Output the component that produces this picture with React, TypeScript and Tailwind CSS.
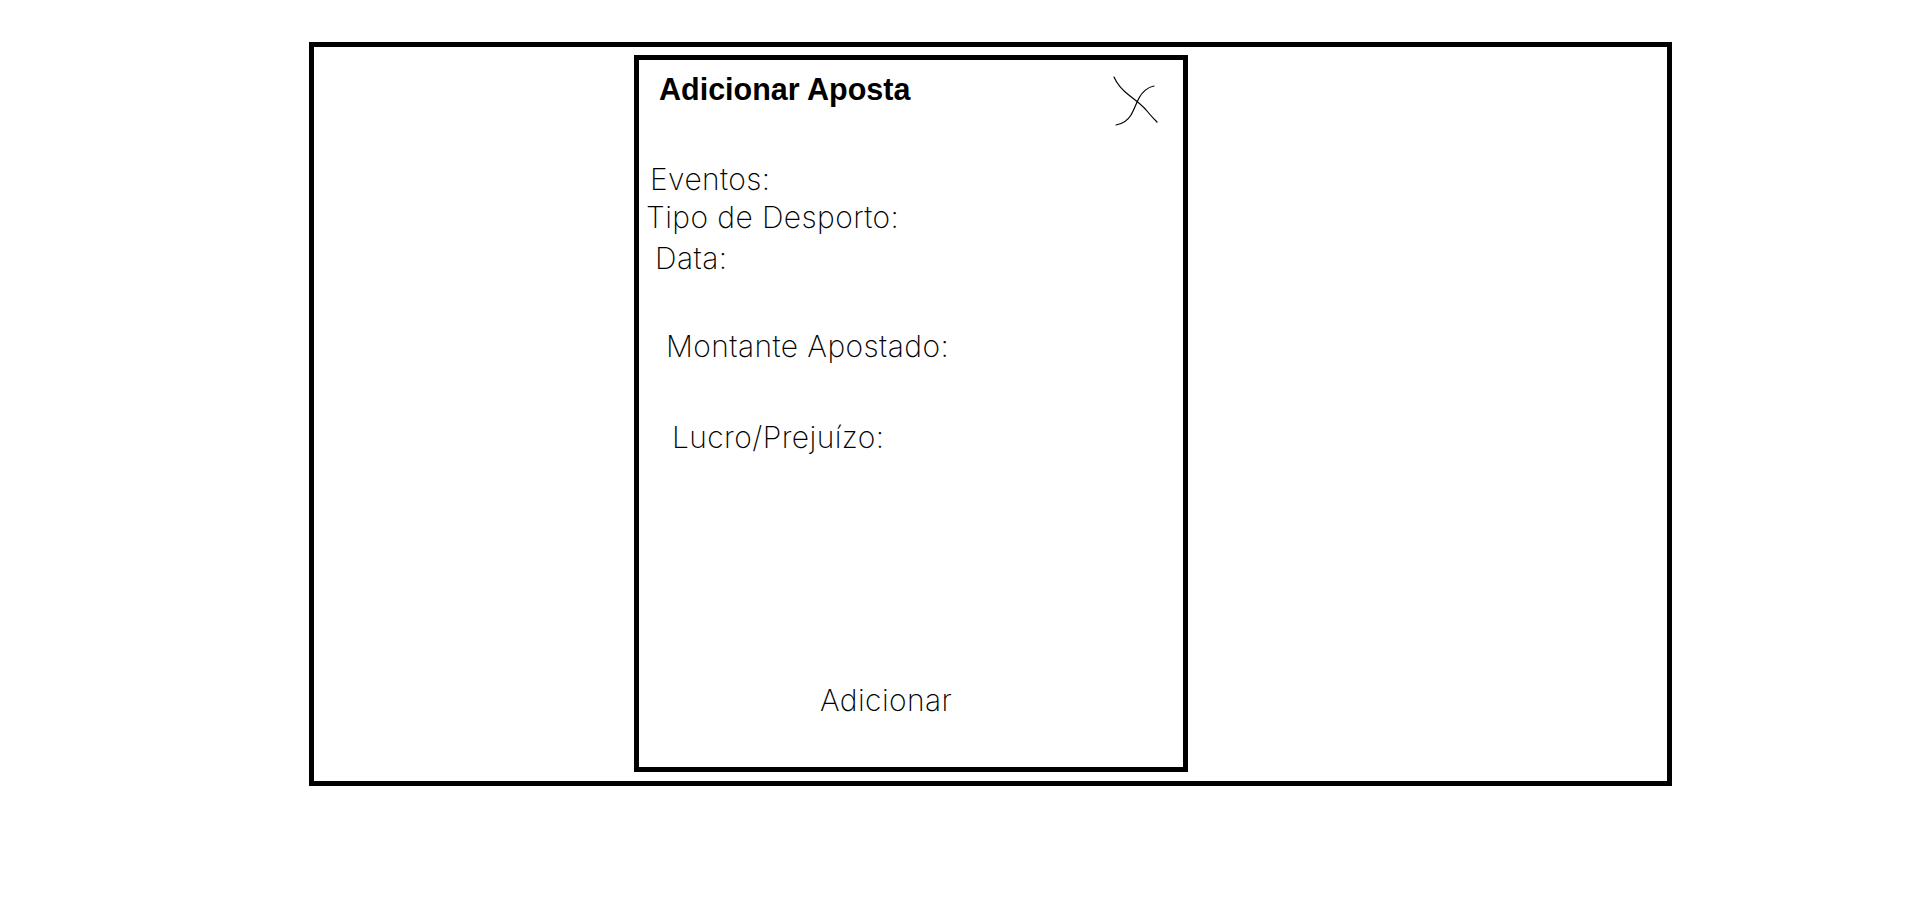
import React from "react";

function CloseSketch() {
  return (
    <svg width="50" height="54" viewBox="0 0 50 54" fill="none" className="mt-[14px] mr-[23px] shrink-0">
      <path d="M4 3 C7 10 12 16 20 22 S33 32 37 37 S44 45 47 48" stroke="#000" strokeWidth="1.2" strokeLinecap="round" />
      <path d="M44 12 C38 13 32 18 29 24 S24 36 21 41 S12 50 6 51" stroke="#000" strokeWidth="1.2" strokeLinecap="round" />
    </svg>
  );
}

export default function App() {
  const label =
    "font-['Inter',sans-serif] font-extralight text-[30px] tracking-[0.4px] leading-none text-black whitespace-nowrap";
  return (
    <div className="w-full h-[903px] bg-white overflow-hidden">
      <div className="ml-[309px] mt-[42px] w-[1363px] h-[744px] border-[5px] border-black box-border">
        <div className="ml-[320px] mt-[8px] w-[554px] h-[717px] border-[5px] border-black box-border flex flex-col">
          <div className="flex items-start justify-between">
            <h1 className="ml-[20px] mt-[14px] font-['Liberation_Sans',sans-serif] font-bold text-[30.5px] leading-none text-black">
              Adicionar Aposta
            </h1>
            <CloseSketch />
          </div>
          <div className={`${label} ml-[11px] mt-[36px]`}>Eventos:</div>
          <div className={`${label} ml-[7px] mt-[8px]`}>Tipo de Desporto:</div>
          <div className={`${label} ml-[16px] mt-[11px]`}>Data:</div>
          <div className={`${label} ml-[27px] mt-[58px]`}>Montante Apostado:</div>
          <div className={`${label} ml-[33px] mt-[61px]`}>Lucro/Prejuízo:</div>
          <div className={`${label} ml-[181px] mt-[233px]`}>Adicionar</div>
        </div>
      </div>
    </div>
  );
}
